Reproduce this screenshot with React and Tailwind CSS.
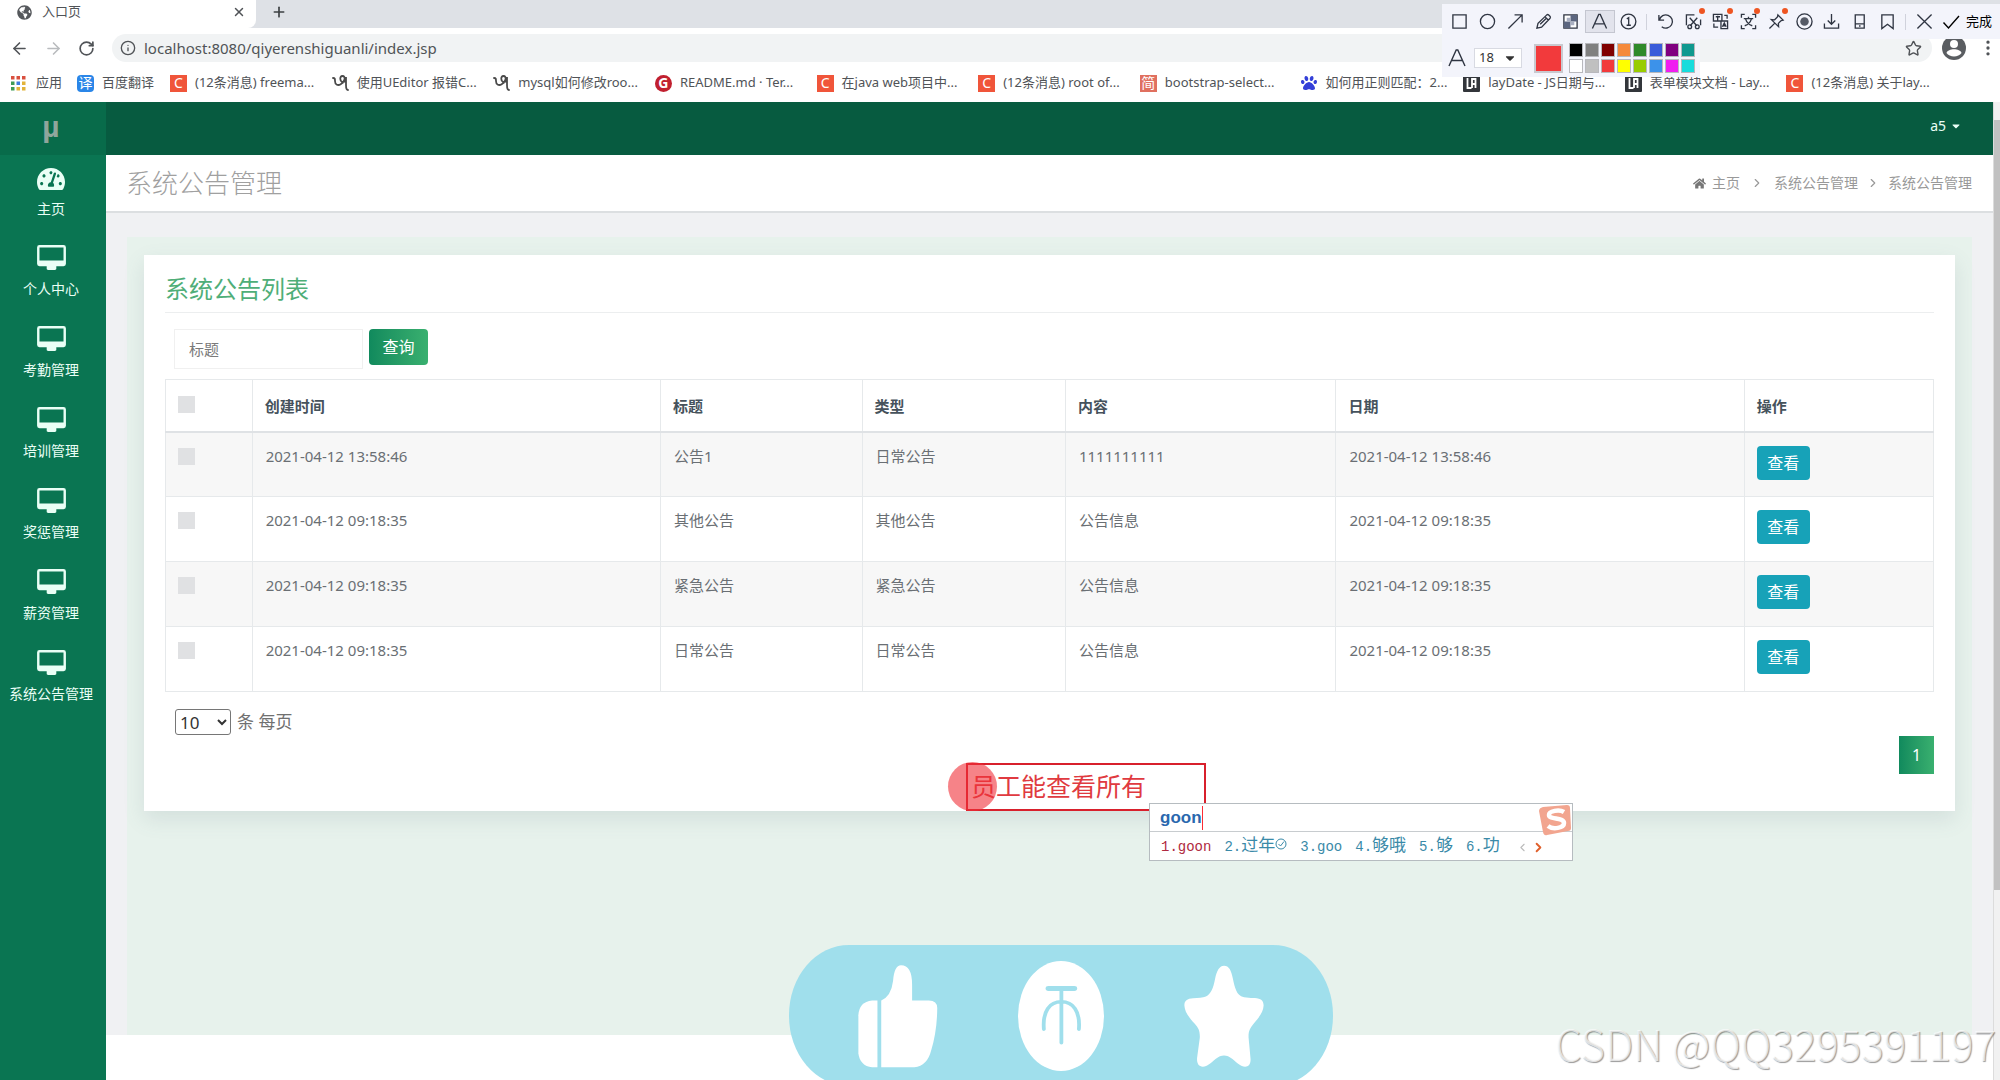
import React from "react";
import { X, ArrowLeft, ArrowRight, RotateCw, Info, Plus, Star, MoreVertical, ChevronLeft, ChevronRight } from "lucide-react";
import { FaTachometerAlt, FaHome, FaCaretDown, FaGlobeAmericas, FaPaw } from "react-icons/fa";

function AppsIcon() {
  const colors = ["#d9503f", "#d9503f", "#d9503f", "#3f9b57", "#3e7de0", "#e2b33a", "#3f9b57", "#e2b33a", "#e2b33a"];
  return (
    <svg width="16" height="16" viewBox="0 0 16 16" aria-hidden="true">
      {colors.map((c, i) => (
        <rect key={i} x={1 + (i % 3) * 5.5} y={1 + Math.floor(i / 3) * 5.5} width="3.5" height="3.5" fill={c} />
      ))}
    </svg>
  );
}

function LetterIcon({ children, className }) {
  return (
    <span aria-hidden="true" className={"flex size-[17px] shrink-0 items-center justify-center text-[14px] leading-none text-white " + className}>
      {children}
    </span>
  );
}

function LoopIcon() {
  return (
    <svg width="17" height="18" viewBox="0 0 17 18" fill="none" stroke="#4a4a4a" strokeWidth="1.8" strokeLinecap="round" className="shrink-0" aria-hidden="true">
      <path d="M1 4c2 0 2 1 2 3 0 4 3 5 6 3 4-2 5-8 1.500-8S8 8 11 8s3-3 3-5v8c0 3 .5 5 2 5" />
    </svg>
  );
}

function LayIcon() {
  return (
    <svg width="17" height="17" viewBox="0 0 17 17" className="shrink-0" aria-hidden="true">
      <rect width="17" height="17" rx="1" fill="#33363b" />
      <path d="M4.500 3v10h4M9 13V4h3.500v9M9 9h3.500" stroke="#fff" strokeWidth="1.800" fill="none" />
    </svg>
  );
}

const csdn = <LetterIcon className="bg-[#f0553a]">C</LetterIcon>;
const bookmarks = [
  [csdn, "(12条消息) freema..."],
  [<LoopIcon />, "使用UEditor 报错C..."],
  [<LoopIcon />, "mysql如何修改roo..."],
  [<LetterIcon className="rounded-full bg-[#c1202f] font-bold">G</LetterIcon>, "README.md · Ter..."],
  [csdn, "在java web项目中..."],
  [csdn, "(12条消息) root of..."],
  [<LetterIcon className="bg-[#e0705f] text-[13px]">简</LetterIcon>, "bootstrap-select..."],
  [<FaPaw size={16} color="#3440d8" className="shrink-0" />, "如何用正则匹配：2..."],
  [<LayIcon />, "layDate - JS日期与..."],
  [<LayIcon />, "表单模块文档 - Lay..."],
  [csdn, "(12条消息) 关于lay..."],
];

function Browser() {
  return (
    <div className="text-[#505357]">
      <div className="flex h-7 bg-[#dee1e6]">
        <div className="flex w-64 items-center rounded-br-lg bg-white pb-1 pl-[17px] pr-2.5">
          <FaGlobeAmericas size={15} color="#55585c" />
          <span className="ml-2.5 flex-1 text-[13px]">入口页</span>
          <button aria-label="关闭标签页"><X size={14} strokeWidth={2.5} /></button>
        </div>
        <button aria-label="新标签页" className="ml-[15px] pb-1 text-[#3c4043]"><Plus size={16} strokeWidth={2.5} /></button>
      </div>
      <div className="flex h-10 items-center bg-white pl-2.5">
        <button aria-label="后退" className="w-[34px]"><ArrowLeft size={19} /></button>
        <button aria-label="前进" className="w-[34px] text-[#b9bbbe]"><ArrowRight size={19} /></button>
        <button aria-label="重新加载" className="w-[34px]"><RotateCw size={17} strokeWidth={2.4} /></button>
        <div className="flex h-7 flex-1 items-center rounded-full bg-[#f1f3f4] pl-2 pr-2.5">
          <Info size={16} />
          <input aria-label="地址" defaultValue="localhost:8080/qiyerenshiguanli/index.jsp" className="ml-2 flex-1 bg-transparent text-[15px] outline-none" />
          <button aria-label="收藏"><Star size={17} /></button>
        </div>
        <button aria-label="用户" className="ml-2.5">
          <svg width="24" height="24" viewBox="0 0 24 24" aria-hidden="true">
            <circle cx="12" cy="12" r="12" fill="#5a5d61" />
            <circle cx="12" cy="8" r="4" fill="#fff" />
            <path d="M4.500 17c1.500-5 13.500-5 15 0-3 4.500-12 4.500-15 0z" fill="#fff" />
          </svg>
        </button>
        <button aria-label="菜单" className="ml-3 mr-0.5"><MoreVertical size={20} /></button>
      </div>
      <nav aria-label="书签" className="flex h-[34px] items-center bg-white pb-1 text-[13px] whitespace-nowrap">
        <a href="#apps" className="flex w-[77px] items-center gap-2.5 pl-2.5"><AppsIcon />应用</a>
        <a href="#fanyi" className="flex w-[93px] items-center gap-2">
          <LetterIcon className="rounded-sm bg-[#2a86e8] text-[13px]">译</LetterIcon>百度翻译
        </a>
        <div className="mr-13 flex flex-1">
          {bookmarks.map(([icon, text], i) => (
            <a href="#bookmark" key={i} className="flex flex-1 basis-0 items-center gap-2">{icon}{text}</a>
          ))}
        </div>
      </nav>
    </div>
  );
}

function MonitorIcon() {
  return (
    <svg width="29" height="25" viewBox="0 0 30 26" fill="currentColor" aria-hidden="true">
      <path fillRule="evenodd" d="M2.5 0h25A2.500 2.500 0 0 1 30 2.500v17a2.500 2.500 0 0 1-2.500 2.500H20v2.500c0 1-.5 1.500-1.500 1.500h-7c-1 0-1.500-.5-1.500-1.500V22H2.500A2.500 2.500 0 0 1 0 19.500v-17A2.500 2.500 0 0 1 2.500 0zM2.500 2.500V16h25V2.500z" />
    </svg>
  );
}

const menu = ["主页", "个人中心", "考勤管理", "培训管理", "奖惩管理", "薪资管理", "系统公告管理"];

function Sidebar() {
  return (
    <aside className="w-[106px] shrink-0 bg-[#0a7552] text-[#eafff6]">
      <div className="flex h-[53px] items-center justify-center bg-[#086b4a] pr-1 pb-1 font-['Liberation_Sans'] text-[30px] font-bold text-[#8fa69c]">µ</div>
      <nav className="flex flex-col pr-1">
        {menu.map((name, i) => (
          <a href="#menu" key={name} className={(i ? "h-[81px] pt-2" : "h-20 pt-2.5") + " flex flex-col items-center text-sm"}>
            <span className="flex h-7 items-center">{i ? <MonitorIcon /> : <FaTachometerAlt size={28} />}</span>
            <span className={i ? "mt-2" : "mt-1.5"}>{name}</span>
          </a>
        ))}
      </nav>
    </aside>
  );
}

const rows = [
  ["2021-04-12 13:58:46", "公告1", "日常公告", "1111111111"],
  ["2021-04-12 09:18:35", "其他公告", "其他公告", "公告信息"],
  ["2021-04-12 09:18:35", "紧急公告", "紧急公告", "公告信息"],
  ["2021-04-12 09:18:35", "日常公告", "日常公告", "公告信息"],
];
const headings = ["创建时间", "标题", "类型", "内容", "日期", "操作"];
const boxClass = "block size-[17px] appearance-none bg-[#e0e1e3]";

function NoticeTable() {
  return (
    <table className="w-full table-fixed border-collapse text-left text-[15px] leading-6 text-[#6a6f74]">
      <colgroup>
        <col className="w-[4.9%]" /><col className="w-[23.1%]" /><col className="w-[11.4%]" /><col className="w-[11.5%]" />
        <col className="w-[15.3%]" /><col className="w-[23.1%]" /><col className="w-[10.7%]" />
      </colgroup>
      <thead>
        <tr className="h-[52px] border-b-2 border-[#dfe2e5] text-[#46525c]">
          <th className="border-x border-t border-[#e6e9eb] px-3 pt-4 align-top">
            <input type="checkbox" aria-label="全选" className={boxClass} />
          </th>
          {headings.map((h) => <th key={h} className="border-x border-t border-[#e6e9eb] px-3 pt-0.5 font-bold">{h}</th>)}
        </tr>
      </thead>
      <tbody>
        {rows.map(([time, title, type, text], i) => (
          <tr key={i} className="h-[65px] align-top odd:bg-[#f7f7f7]">
            <td className="border border-[#e6e9eb] px-3 pt-[15px]">
              <input type="checkbox" aria-label={"选择" + title} className={boxClass} />
            </td>
            {[time, title, type, text, time].map((v, k) => (
              <td key={k} className="border border-[#e6e9eb] px-[13px] pt-[11px]">{v}</td>
            ))}
            <td className="border border-[#e6e9eb] px-3 pt-[13px]">
              <button className="block h-[34px] w-[53px] rounded bg-[#17a2b8] text-base text-white">查看</button>
            </td>
          </tr>
        ))}
      </tbody>
    </table>
  );
}

function Page() {
  return (
    <main className="min-w-0 flex-1">
      <header className="flex h-[53px] items-center justify-end bg-[#075b40] pr-[31px] pb-1.5 text-sm text-[#eafff6]">
        <button className="flex items-center gap-1">a5 <FaCaretDown size={12} /></button>
      </header>
      <div className="flex h-[58px] items-center justify-between border-b-2 border-[#dcdfe1] bg-white pl-5 pr-[21px]">
        <h1 className="text-[26px] font-light text-[#a0a0a0]">系统公告管理</h1>
        <nav aria-label="面包屑" className="flex items-center text-sm text-[#999]">
          <FaHome size={13} color="#777" />
          <a href="#home" className="ml-1.5">主页</a>
          <ChevronRight size={14} className="mx-2.5" />
          <a href="#notice">系统公告管理</a>
          <ChevronRight size={14} className="mx-2" />
          <span>系统公告管理</span>
        </nav>
      </div>
      <div className="bg-[#f0f1f3] px-[21px] pt-6">
        <div className="min-h-[798px] bg-[#e7f2ec] px-[17px] pt-[18px]">
          <section className="bg-white px-[21px] pb-[37px] shadow-[0_8px_20px_rgba(90,110,130,0.14)]">
            <h2 className="border-b border-[#eceeef] pt-4 pb-[5px] text-2xl leading-9 text-[#4fae78]">系统公告列表</h2>
            <form className="flex gap-1.5 pt-4 pb-2.5 pl-[9px]" onSubmit={(e) => e.preventDefault()}>
              <input aria-label="标题" placeholder="标题" className="h-10 w-[189px] border border-[#f0f0f0] px-3.5 text-[15px] placeholder:text-[#7a7a7a]" />
              <button className="h-9 w-[59px] rounded bg-linear-to-r from-[#108a5d] to-[#39b06f] text-base text-white">查询</button>
            </form>
            <NoticeTable />
            <div className="flex items-center gap-1.5 pt-[17px] pl-2.5 text-[17px] text-[#707070]">
              <select id="size" className="h-[26px] w-14 rounded-[3px] border border-[#767676] bg-white text-[17px] leading-none text-[#333]"><option>10</option></select>
              <label htmlFor="size">条 每页</label>
            </div>
            <div className="flex justify-end pt-px">
              <button className="h-[38px] w-[35px] bg-linear-to-r from-[#108a5d] to-[#39b06f] text-base text-white">1</button>
            </div>
          </section>
        </div>
      </div>
    </main>
  );
}

const palette = [
  "bg-black", "bg-[#808080]", "bg-[#800000]", "bg-[#f58a3c]", "bg-[#2f8a2a]", "bg-[#3a5bd9]", "bg-[#800080]", "bg-[#109890]",
  "bg-white", "bg-[#c0c0c0]", "bg-[#f23a3c]", "bg-[#ffff00]", "bg-[#99cc00]", "bg-[#3c92ea]", "bg-[#f01cf0]", "bg-[#18dcdc]",
];

function ToolIcon({ children, size = 18 }) {
  return (
    <svg width={size} height={size} viewBox="0 0 18 18" fill="none" stroke="currentColor" strokeWidth="1.400" aria-hidden="true">
      {children}
    </svg>
  );
}

const tools = [
  ["矩形", <path d="M2 2h14v14H2z" />],
  ["椭圆", <circle cx="9" cy="9" r="7.500" />],
  ["箭头", <path d="M1.500 16.500L16 2M8 2h8v8" />],
  ["画笔", <path d="M2 16l1.200-5L12.500 2q1-.8 2 .2l1.300 1.300q1 1 .2 2L7 15zM11 4.500L14 7.500M5.500 12l6-6" />],
  ["马赛克", <><path d="M2 2h14v14H2z" fill="#fff" /><path d="M9 2h7v7H9zM2 9h7v7H2z" fill="#5c6680" stroke="none" /><path d="M5 5h4v4H5zM9 9h4v4H9z" fill="#aab0c2" stroke="none" /></>],
  ["文字", <path d="M1.500 16.500L8.200 1.500h1.600L16.500 16.500M4 11.500h10" />],
  ["序号", <><circle cx="9" cy="9" r="7.800" /><path d="M7.200 6.200L9.200 5v8M7 13h4.500" /></>],
  null,
  ["撤销", <path d="M2 2v5.500h5.500M2.500 7.500A7 7 0 1 1 5 14.500" />],
  ["裁剪", <><path d="M1.500 13V2H10M16.500 7v6M5 5l7.500 8.500M13 5l-7.500 8.500" /><circle cx="5" cy="14.500" r="2" /><circle cx="13" cy="14.500" r="2" /></>, true],
  ["翻译", <><path d="M1.500 1.500h9v7h-9zM4 4h4.500M6 3v5M9.500 8.500h7v8h-7zM11 14.500l2-4 2 4M11.500 13.500h3M2 11v4h4.500M13 2.500h3v3.500" /></>, true],
  ["识别文字", <path d="M1.500 5V1.500H5M13 1.500h3.500V5M1.500 13v3.500H5M13 16.500h3.500V13M4 6h10M9 4v2M6 6.500c1 3.500 4 6 7 7M12 6.500c-1 3.500-4 6-7 7" />, true],
  ["固定", <path d="M10.500 2l5.500 5.500-2 .5-3 3 .2 3.500L3.500 7l3.500.2 3-3zM7 11l-5.500 5.500" />, true],
  ["录制", <><circle cx="9" cy="9" r="8" /><circle cx="9" cy="9" r="4.500" fill="#555a66" stroke="none" /></>],
  ["保存", <path d="M9 1v11M5 8l4 4 4-4M1.500 11v5h15v-5" />],
  ["手机", <path d="M4.500 2h9.500v14H4.500zM4.500 11.500H14M8.500 13.800h1.600" />],
  ["书签", <path d="M3 2h12v14.500L9 12l-6 4.500z" />],
  null,
  ["取消", <path d="M1.500 1.500l15 15M16.500 1.500l-15 15" />],
];

function CaptureToolbar() {
  return (
    <div className="absolute top-1 right-0 w-[558px] text-[#2f3542]">
      <div className="flex h-[35px] items-center bg-[#f3f4fb] pl-1">
        {tools.map((t, i) => t ? (
          <button key={i} aria-label={t[0]} className={(t[0] === "文字" ? "border border-[#c4c6d0] bg-[#e2e3ec] " : "") + "relative flex h-[23px] flex-1 items-center justify-center"}>
            <ToolIcon size={17}>{t[1]}</ToolIcon>
            {t[2] && <span className="absolute -top-0.5 right-0.5 size-1.5 rounded-full bg-[#ee5522]" />}
          </button>
        ) : <span key={i} className="mx-1 h-4 w-px bg-[#d0d2dc]" />)}
        <button className="ml-1 flex items-center gap-1.5 pr-2 text-[13px] text-black">
          <ToolIcon><path d="M1.500 9.500L6.500 15 17 3" /></ToolIcon>完成
        </button>
      </div>
      <div className="flex h-[38px] w-[258px] items-center bg-[#f3f4fb] pl-1.5">
        <ToolIcon><path d="M1 17L8.200 1h1.600L17 17M3.800 11.500h10.500" /></ToolIcon>
        <button aria-label="字号" className="ml-2 flex h-5 w-12 items-center justify-between border border-[#d8dae2] bg-white px-1 text-[13px] text-[#333]">
          18 <FaCaretDown size={14} />
        </button>
        <span className="ml-3 size-[29px] border-2 border-[#c9c9cf] bg-[#f23a3c]" />
        <div className="ml-1.5 grid grid-cols-8 gap-0.5">
          {palette.map((c) => <button key={c} aria-label="颜色" className={"size-3.5 border border-[#b8b8bd] " + c} />)}
        </div>
      </div>
    </div>
  );
}

function Candidate({ n, children, cjk }) {
  return (
    <span>
      {n}.<span className={cjk ? "text-[17px]" : ""}>{children}</span>
    </span>
  );
}

function Annotation() {
  return (
    <>
      <div className="absolute top-[763px] left-[966px] flex h-12 w-60 items-center border-2 border-[#d8202c] pl-[3px] text-[25px] text-[#e03a40]">
        员工能查看所有
      </div>
      <div className="absolute top-[762px] left-[948px] size-[49px] rounded-full bg-[#f03038]/60" />
      <div className="absolute top-[803px] left-[1149px] h-[58px] w-[424px] border border-[#b6bcc0] bg-white">
        <div className="flex h-7 items-center border-b border-[#c8cccf] pl-2.5">
          <span className="border-r border-red-500 font-['Liberation_Sans'] text-[17px] leading-6 font-bold text-[#2a68ae]">goon</span>
        </div>
        <div className="flex h-7 items-center pt-0.5 pl-[11px] font-['Liberation_Mono','Noto_Sans_CJK_SC',monospace] text-sm text-[#3a8aa8]">
          <div className="flex items-center gap-[13px] whitespace-nowrap">
            <span className="text-[#b02a40]"><Candidate n="1">goon</Candidate></span>
            <span className="flex items-center">
              <Candidate n="2" cjk>过年</Candidate>
              <svg width="12" height="12" viewBox="0 0 12 12" fill="none" stroke="currentColor" className="mb-1.5" aria-hidden="true"><circle cx="6" cy="6" r="5" /><path d="M3.500 6l2 2L9 3.500" /></svg>
            </span>
            <Candidate n="3">goo</Candidate>
            <Candidate n="4" cjk>够哦</Candidate>
            <Candidate n="5" cjk>够</Candidate>
            <Candidate n="6" cjk>功</Candidate>
          </div>
          <button aria-label="上一页" className="ml-4 text-[#bbb]"><ChevronLeft size={13} /></button>
          <button aria-label="下一页" className="ml-0.5 text-[#e0602c]"><ChevronRight size={15} strokeWidth={3} /></button>
        </div>
        <svg width="34" height="33" viewBox="0 0 34 33" className="absolute top-0 right-0" aria-hidden="true">
          <path d="M5 3L29 1q3 0 3 3l1 20q0 3-3 3L9 31q-3 1-4-3L1 7q0-3 4-4z" fill="#f2a58f" />
          <path d="M26 8c-5-3-15-1-15 3 0 5 15 2 15 8 0 5-11 7-16 3" fill="none" stroke="#fff" strokeWidth="4.500" />
        </svg>
      </div>
    </>
  );
}

function ActionPill() {
  return (
    <div className="absolute top-[945px] left-[789px] h-[135px] w-[544px] overflow-hidden">
      <div className="flex h-[141px] items-start justify-between rounded-[60px/70px] bg-[#a0dfec] pt-4 pr-[69px] pl-[69px]">
        <button aria-label="点赞" className="mt-1">
          <svg width="80" height="103" viewBox="229 134 210 308" preserveAspectRatio="none" fill="#fff" aria-hidden="true">
            <path d="M280 240h-14q-34 4-36 44v114q4 38 36 42h14z" />
            <path d="M290 240q26-12 31-58 3-47 21-47 30 0 29 62v43h44q22 1 22 22c0 46-6 92-16 128q-10 46-44 50h-87z" />
          </svg>
        </button>
        <button aria-label="投币">
          <svg width="86" height="110" viewBox="647 122 226 332" preserveAspectRatio="none" fill="none" stroke="#a0dfec" strokeLinecap="round" aria-hidden="true">
            <ellipse cx="760" cy="288" rx="113" ry="166" fill="#fff" stroke="none" />
            <path d="M727 205h68" strokeWidth="15" />
            <path d="M761 208v161M715 328c-4-56 16-83 46-83s50 27 46 83" strokeWidth="10" />
          </svg>
        </button>
        <button aria-label="收藏" className="mt-1">
          <svg width="80" height="103" viewBox="1084 134 208 310" preserveAspectRatio="none" fill="#fff" aria-hidden="true">
            <path d="M1188 136C1201 136 1207 150 1211 175C1216 205 1222 224 1234 229C1246 234 1256 233 1268 233C1284 234 1291 241 1291 256C1290 274 1282 288 1266 309C1255 324 1251 334 1252 354L1257 416C1258 432 1252 440 1243 440C1231 440 1223 429 1210 417C1194 403 1182 403 1166 417C1153 429 1145 440 1133 440C1122 440 1117 430 1118 414L1125 354C1126 334 1122 324 1112 311C1094 288 1086 274 1085 256C1085 241 1092 235 1108 234C1122 233 1132 233 1141 229C1154 222 1160 205 1165 175C1169 150 1177 136 1188 136Z" />
          </svg>
        </button>
      </div>
    </div>
  );
}

export default function App() {
  return (
    <div className="relative flex min-h-screen flex-col overflow-hidden bg-white font-['Noto_Sans','Noto_Sans_CJK_SC',sans-serif]">
      <Browser />
      <div className="flex flex-1">
        <Sidebar />
        <Page />
        <div className="flex w-[7px] flex-col border-l border-[#dcdcdc] bg-[#f1f1f1] pt-[18px]">
          <div className="h-[770px] bg-[#c1c1c1]" />
        </div>
      </div>
      <CaptureToolbar />
      <Annotation />
      <ActionPill />
      <div className="absolute right-1 bottom-4 font-['Noto_Sans_CJK_SC',sans-serif] text-[42px] leading-none font-light whitespace-nowrap text-white/70 [text-shadow:1px_1px_1px_rgba(0,0,0,0.4)]">
        CSDN @QQ3295391197
      </div>
    </div>
  );
}
